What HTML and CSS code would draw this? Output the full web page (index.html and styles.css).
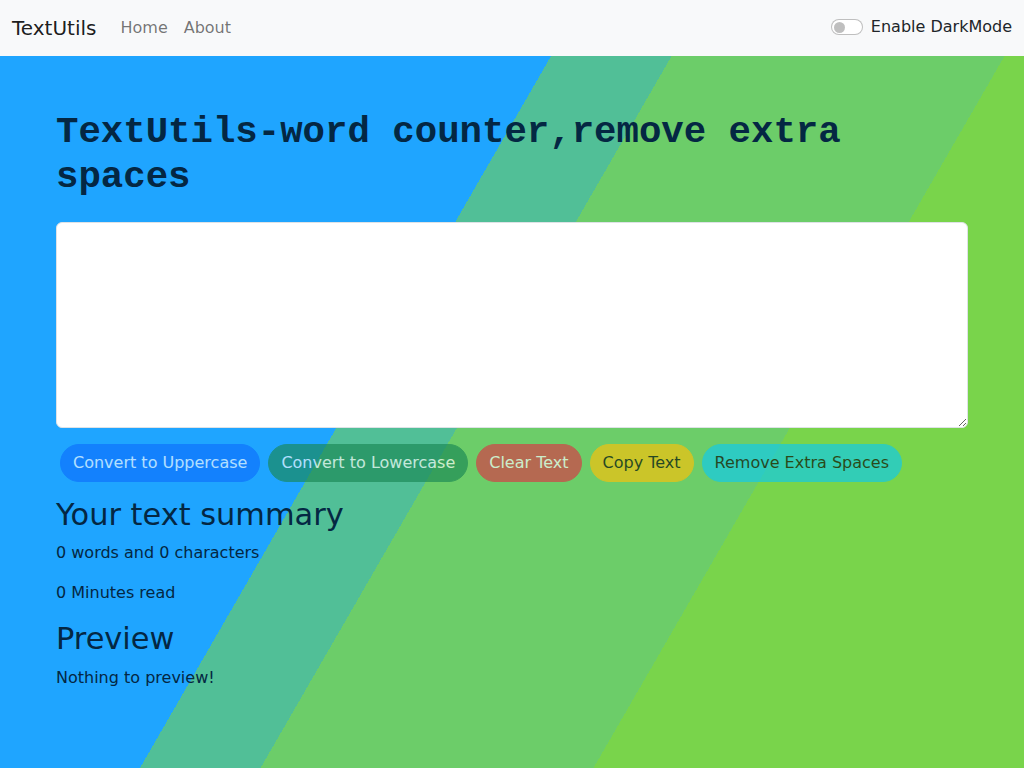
FILE: index.html
```html
<!DOCTYPE html>
<html lang="en">
<head>
<meta charset="utf-8">
<title>TextUtils</title>
<link rel="stylesheet" href="styles.css">
</head>
<body>
<nav class="navbar">
  <div class="nav-left">
    <a class="brand" href="#">TextUtils</a>
    <ul class="nav-links">
      <li><a class="nav-link" href="#">Home</a></li>
      <li><a class="nav-link" href="#">About</a></li>
    </ul>
  </div>
  <div class="switch">
    <span class="switch-input"><span class="knob"></span></span>
    <label class="switch-label">Enable DarkMode</label>
  </div>
</nav>
<main class="page">
  <div class="container">
    <h1 class="title">TextUtils-word counter,remove extra spaces</h1>
    <textarea class="text-box" rows="8"></textarea>
    <div class="buttons">
      <button class="btn btn-primary" disabled>Convert to Uppercase</button>
      <button class="btn btn-success" disabled>Convert to Lowercase</button>
      <button class="btn btn-danger" disabled>Clear Text</button>
      <button class="btn btn-warning" disabled>Copy Text</button>
      <button class="btn btn-info" disabled>Remove Extra Spaces</button>
    </div>
    <h2 class="sub">Your text summary</h2>
    <p class="line">0 words and 0 characters</p>
    <p class="line">0 Minutes read</p>
    <h2 class="sub">Preview</h2>
    <p class="line">Nothing to preview!</p>
  </div>
</main>
</body>
</html>
```

FILE: styles.css
```css
* { box-sizing: border-box; }
html, body { margin: 0; padding: 0; }
body {
  font-family: "DejaVu Sans", sans-serif;
  font-size: 16px;
  line-height: 1.5;
  color: #212529;
  background: #fff;
}
.navbar {
  height: 56px;
  background: #f8f9fa;
  display: flex;
  align-items: center;
  justify-content: space-between;
  padding: 0 12px;
}
.nav-left { display: flex; align-items: center; }
.brand {
  font-size: 20px;
  line-height: 30px;
  color: rgba(0,0,0,0.9);
  text-decoration: none;
  margin-right: 16px;
}
.nav-links { list-style: none; margin: 0; padding: 0; display: flex; }
.nav-link {
  display: block;
  padding: 8px;
  color: rgba(0,0,0,0.55);
  text-decoration: none;
}
.switch { display: flex; align-items: center; gap: 8px; margin-top: -2px; }
.switch-input {
  width: 32px;
  height: 16px;
  border: 1px solid rgba(0,0,0,0.25);
  border-radius: 16px;
  background: #fff;
  display: flex;
  align-items: center;
  padding-left: 2px;
}
.knob {
  width: 11px;
  height: 11px;
  border-radius: 50%;
  background: rgba(0,0,0,0.25);
}
.switch-label { color: #212529; }

.page {
  min-height: calc(100vh - 56px);
  background: linear-gradient(120deg,
    #1fa5ff 0 38.4%,
    #51bf97 38.4% 46.8%,
    #6ccd69 46.8% 70%,
    #79d44b 70% 100%);
  color: #042743;
}
.container { padding: 54px 56px 0; }
.title {
  font-family: "Liberation Mono", monospace;
  font-weight: bold;
  font-size: 37.36px;
  line-height: 1.2;
  margin: 0 0 22px;
  color: #042743;
}
.text-box {
  display: block;
  width: 100%;
  height: 206px;
  padding: 6px 12px;
  border: 1px solid #dee2e6;
  border-radius: 6px;
  background: #fff;
  font-family: "DejaVu Sans", sans-serif;
  font-size: 16px;
  line-height: 1.5;
  margin: 0;
}
.buttons { display: flex; gap: 8px; padding: 16px 4px 0; }
.btn {
  font-family: "DejaVu Sans", sans-serif;
  font-size: 16px;
  line-height: 24px;
  padding: 6px 12px;
  border: 1px solid transparent;
  border-radius: 50rem;
  opacity: 0.65;
  color: #fff;
}
.btn-primary { background: #0d6efd; border-color: #0d6efd; }
.btn-success { background: #198754; border-color: #198754; }
.btn-danger { background: #dc3545; border-color: #dc3545; }
.btn-warning { background: #ffc107; border-color: #ffc107; color: #000; }
.btn-info { background: #0dcaf0; border-color: #0dcaf0; color: #000; }
.sub {
  font-size: 30.42px;
  font-weight: 500;
  line-height: 1.2;
  margin: 15px 0 8px;
}
.sub + .line + .line + .sub { margin-top: 0; }
.line { margin: 0 0 16px; }
```
